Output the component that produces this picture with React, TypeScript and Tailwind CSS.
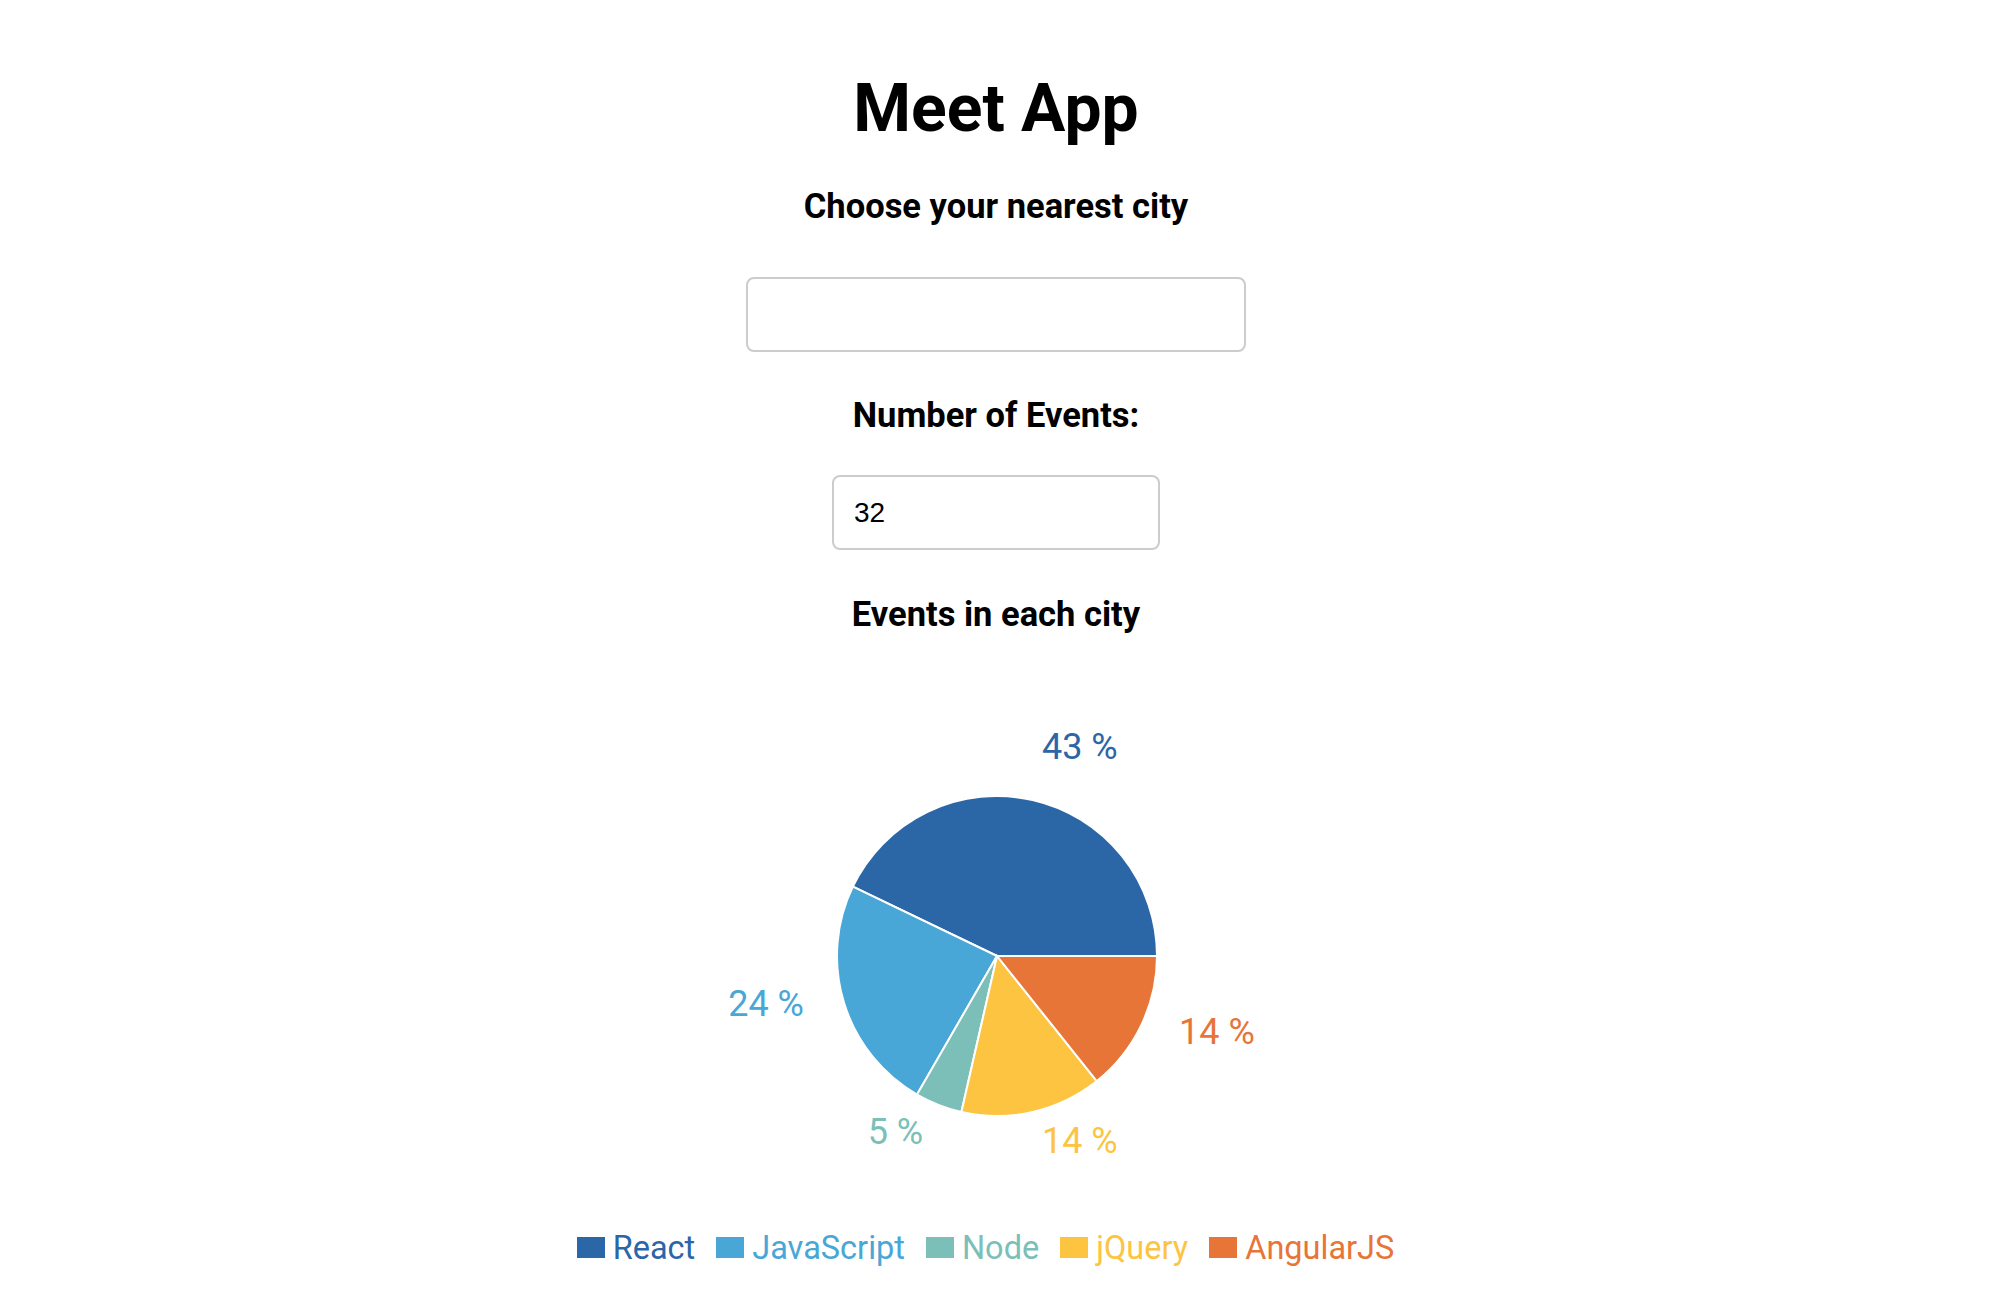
import React from "react";

const slices = [
  { name: "React", value: 9, color: "#2b66a6" },
  { name: "JavaScript", value: 5, color: "#48a7d6" },
  { name: "Node", value: 1, color: "#7bbfb8" },
  { name: "jQuery", value: 3, color: "#fdc441" },
  { name: "AngularJS", value: 3, color: "#e77538" },
];

const CX = 401;
const CY = 322;
const R = 160;

function point(angle: number, radius: number) {
  const rad = (angle * Math.PI) / 180;
  return { x: CX + radius * Math.cos(rad), y: CY - radius * Math.sin(rad) };
}

function EventsPie() {
  const total = slices.reduce((s, d) => s + d.value, 0);
  let start = 0;

  return (
    <svg width={800} height={560} viewBox="0 0 800 560" className="mt-[2px]">
      {slices.map((d) => {
        const sweep = (d.value / total) * 360;
        const end = start + sweep;
        const a = point(start, R);
        const b = point(end, R);
        const large = sweep > 180 ? 1 : 0;
        const mid = start + sweep / 2;
        const lp = point(mid, R + 42);
        const anchor = Math.cos((mid * Math.PI) / 180) >= 0 ? "start" : "end";
        start = end;
        return (
          <g key={d.name}>
            <path
              d={`M${CX},${CY} L${a.x},${a.y} A${R},${R} 0 ${large} 0 ${b.x},${b.y} Z`}
              fill={d.color}
              stroke="#fff"
              strokeWidth={2}
            />
            <text
              x={lp.x}
              y={lp.y}
              fill={d.color}
              textAnchor={anchor}
              fontSize={36}
              fontFamily="Roboto, sans-serif"
            >
              {Math.round((d.value / total) * 100)} %
            </text>
          </g>
        );
      })}
    </svg>
  );
}

export default function App() {
  return (
    <div className="min-h-screen w-full bg-white flex flex-col items-center pt-[76px] font-['Roboto',sans-serif] text-black">
      <h1 className="text-[66px] leading-none font-bold">Meet App</h1>

      <h4 className="mt-[47px] text-[34.5px] leading-none font-bold">Choose your nearest city</h4>
      <input
        type="text"
        className="mt-[53px] w-[500px] h-[75px] border-2 border-[#cccccc] rounded-[8px] px-[22px] text-[27px] font-['Liberation_Sans',Arial,sans-serif] outline-none"
      />

      <h4 className="mt-[46px] text-[34.5px] leading-none font-bold">Number of Events:</h4>
      <input
        type="number"
        defaultValue={32}
        className="mt-[43px] w-[328px] h-[75px] border-2 border-[#cccccc] rounded-[8px] pl-[20px] text-[28px] font-['Liberation_Sans',Arial,sans-serif] outline-none [appearance:textfield]"
      />

      <h4 className="mt-[47px] text-[34.5px] leading-none font-bold">Events in each city</h4>

      <EventsPie />

      <ul className="mt-[38px] flex items-center text-[32.5px] leading-none">
        {slices.map((d) => (
          <li key={d.name} className="flex items-center mr-[21px]" style={{ color: d.color }}>
            <span className="w-[28px] h-[21px] mr-[8px]" style={{ backgroundColor: d.color }} />
            {d.name}
          </li>
        ))}
      </ul>
    </div>
  );
}
